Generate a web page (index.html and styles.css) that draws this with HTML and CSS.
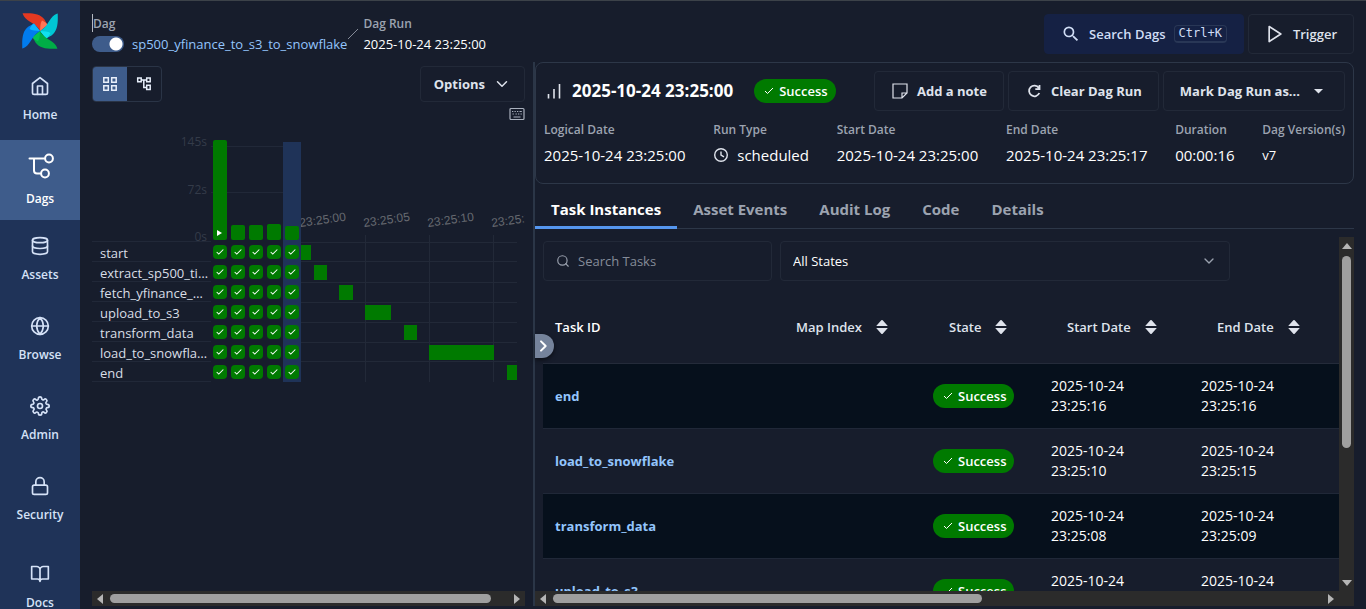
FILE: index.html
```html
<!DOCTYPE html>
<html lang="en">
<head>
<meta charset="utf-8">
<title>sp500_yfinance_to_s3_to_snowflake - Airflow</title>
<link rel="stylesheet" href="styles.css">
</head>
<body>
<svg class="defs" width="0" height="0" aria-hidden="true">
  <symbol id="check" viewBox="0 0 24 24"><path d="M20 6L9 17l-5-5"/></symbol>
  <symbol id="sort" viewBox="0 0 16 18"><path d="M7.300 2.300L2.200 8h11.600L8.700 2.300Q8 1.600 7.300 2.300zM7.300 15.700L2.200 10h11.600L8.700 15.700Q8 16.400 7.300 15.700z"/></symbol>
</svg>

<nav class="sidebar">
  <a class="logo" href="#" aria-label="Airflow">
    <svg viewBox="0 0 36 36" width="36" height="36">
      <path fill="#e43921" d="M.6.3C11-.1 18 .5 22.500 6.500L25.500 12 18 18C14.500 11.500 9 10 5.500 7 2.500 5 1 2 .6.300z"/>
      <path fill="#ff7557" d="M18 18C18.500 14 18 10 20 7.500 22.500 8.500 25 10.500 25.500 12z"/>
      <g transform="rotate(90 18 18)"><path fill="#00c7d4" d="M.6.3C11-.1 18 .5 22.500 6.500L25.500 12 18 18C14.500 11.500 9 10 5.500 7 2.500 5 1 2 .6.300z"/><path fill="#11e1ee" d="M18 18C18.500 14 18 10 20 7.500 22.500 8.500 25 10.500 25.500 12z"/></g>
      <g transform="rotate(180 18 18)"><path fill="#00ad46" d="M.6.3C11-.1 18 .5 22.500 6.500L25.500 12 18 18C14.500 11.500 9 10 5.500 7 2.500 5 1 2 .6.300z"/><path fill="#04c252" d="M18 18C18.500 14 18 10 20 7.500 22.500 8.500 25 10.500 25.500 12z"/></g>
      <g transform="rotate(270 18 18)"><path fill="#017cee" d="M.6.3C11-.1 18 .5 22.500 6.500L25.500 12 18 18C14.500 11.500 9 10 5.500 7 2.500 5 1 2 .6.300z"/><path fill="#0cb6ff" d="M18 18C18.500 14 18 10 20 7.500 22.500 8.500 25 10.500 25.500 12z"/></g>
    </svg>
  </a>
  <a class="nav" href="#"><svg class="line" viewBox="0 0 24 24"><path d="M3 9l9-7 9 7v11a2 2 0 0 1-2 2H5a2 2 0 0 1-2-2z"/><path d="M9 22V12h6v10"/></svg>Home</a>
  <a class="nav active" href="#"><svg class="line big" viewBox="0 0 28 28"><path d="M3.500 6.500h15M8 6.500V18.500a3 3 0 0 0 3 3h3.500"/><circle cx="23" cy="6.500" r="3.900"/><circle cx="19" cy="21.500" r="3.900"/></svg>Dags</a>
  <a class="nav" href="#"><svg class="line" viewBox="0 0 24 24"><ellipse cx="12" cy="5" rx="9" ry="3"/><path d="M21 12c0 1.660-4 3-9 3s-9-1.340-9-3"/><path d="M3 5v14c0 1.660 4 3 9 3s9-1.340 9-3V5"/></svg>Assets</a>
  <a class="nav" href="#"><svg class="line" viewBox="0 0 24 24"><circle cx="12" cy="12" r="10"/><path d="M2 12h20M12 2a15.300 15.300 0 0 1 4 10 15.300 15.300 0 0 1-4 10 15.300 15.300 0 0 1-4-10 15.300 15.300 0 0 1 4-10z"/></svg>Browse</a>
  <a class="nav" href="#"><svg class="line" viewBox="0 0 24 24"><circle cx="12" cy="12" r="3"/><path d="M19.400 15a1.650 1.650 0 0 0 .33 1.820l.06.06a2 2 0 0 1-2.830 2.830l-.06-.06a1.650 1.650 0 0 0-2.800 1.170V21a2 2 0 0 1-4 0v-.09A1.650 1.650 0 0 0 9 19.400a1.650 1.650 0 0 0-1.820.33l-.06.06a2 2 0 0 1-2.830-2.830l.06-.06A1.650 1.650 0 0 0 3.180 14H3a2 2 0 0 1 0-4h.09A1.650 1.650 0 0 0 4.600 9a1.650 1.650 0 0 0-.33-1.820l-.06-.06a2 2 0 0 1 2.830-2.830l.06.06A1.650 1.650 0 0 0 10 3.180V3a2 2 0 0 1 4 0v.09a1.650 1.650 0 0 0 2.800 1.170l.06-.06a2 2 0 0 1 2.830 2.830l-.06.06A1.650 1.650 0 0 0 20.820 10H21a2 2 0 0 1 0 4h-.09a1.650 1.650 0 0 0-1.510 1z"/></svg>Admin</a>
  <a class="nav" href="#"><svg class="line" viewBox="0 0 24 24"><rect x="3" y="11" width="18" height="11" rx="2"/><path d="M7 11V7a5 5 0 0 1 10 0v4"/></svg>Security</a>
  <a class="nav docs" href="#"><svg class="line" viewBox="0 0 24 24"><path d="M2 3h6a4 4 0 0 1 4 4v14a3 3 0 0 0-3-3H2zM22 3h-6a4 4 0 0 0-4 4v14a3 3 0 0 1 3-3h7z"/></svg>Docs</a>
</nav>

<main class="page">
  <header class="topbar">
    <div class="crumb">
      <span class="crumb-label caret">Dag</span>
      <span class="crumb-value"><input class="switch" type="checkbox" role="switch" checked aria-label="Dag active"><a href="#">sp500_yfinance_to_s3_to_snowflake</a></span>
    </div>
    <svg class="slash" viewBox="0 0 12 14" width="12" height="14"><path d="M1 12L11 2"/></svg>
    <div class="crumb">
      <span class="crumb-label">Dag Run</span>
      <span class="crumb-value">2025-10-24 23:25:00</span>
    </div>
    <div class="actions">
      <button class="btn search"><svg width="20" height="20" viewBox="0 0 24 24" fill="currentColor"><path d="M15.500 14h-.79l-.28-.27A6.470 6.470 0 0 0 16 9.500 6.500 6.500 0 1 0 9.500 16c1.610 0 3.090-.59 4.230-1.570l.27.28v.79l5 4.990L20.490 19l-4.990-5zm-6 0C7.010 14 5 11.990 5 9.500S7.010 5 9.500 5 14 7.010 14 9.500 11.990 14 9.500 14z"/></svg>Search Dags<kbd>Ctrl+K</kbd></button>
      <button class="btn trigger"><svg class="line" viewBox="0 0 24 24"><path d="M5 3l14 9-14 9z"/></svg>Trigger</button>
    </div>
  </header>

  <div class="panels">
    <section class="left">
      <div class="toolbar">
        <div class="toggle">
          <button class="on" aria-label="Grid view"><svg width="18" height="18" viewBox="0 0 18 18"><path d="M2.800 2.800h4.500v4.500H2.800zM10.700 2.800h4.500v4.500h-4.500zM2.800 10.700h4.500v4.500H2.800zM10.700 10.700h4.500v4.500h-4.500z"/></svg></button>
          <button aria-label="Graph view"><svg width="18" height="18" viewBox="0 0 18 18"><path d="M2.700 3h3.500v3.800H2.700zM11.700 3h3.500v3.800h-3.500zM11.700 10.300h3.500v4.200h-3.500zM6.200 5h5.500M8.800 5v7.400h2.900"/></svg></button>
        </div>
        <button class="btn options">Options<svg class="line" viewBox="0 0 24 24"><path d="M6 9l6 6 6-6"/></svg></button>
      </div>
      <div class="keys"><svg width="16" height="14" viewBox="0 0 16 14"><rect x="1" y="1.500" width="14" height="11" rx="1"/><path d="M3 4.500h1.300M5.500 4.500h1.300M8 4.500h1.300M10.500 4.500h2.300M3.500 7h1.300M6.500 7h1.300M9 7h1.300M11.500 7h1.300M4.500 10h7"/></svg></div>

      <div class="chart">
        <div class="names">
          <div class="axis"><span>145s</span><span>72s</span><span>0s</span></div>
          <div class="name">start</div><div class="name">extract_sp500_tickers</div><div class="name">fetch_yfinance_data</div><div class="name">upload_to_s3</div><div class="name">transform_data</div><div class="name">load_to_snowflake</div><div class="name">end</div>
        </div>
        <div class="runs" id="runs"></div>
        <svg class="gantt" viewBox="0 0 224 242" width="224" height="242">
          <g class="ticks"><path d="M0 102.500H216M0 121.500H216M0 142.500H216M0 162.500H216M0 182.500H216M0 202.500H216M0 221.500H216M64.500 95V242M128.500 95V242M192.500 95V242"/></g>
          <g class="times"><text transform="translate(-1 87) rotate(-8)">23:25:00</text><text transform="translate(63 87) rotate(-8)">23:25:05</text><text transform="translate(127 87) rotate(-8)">23:25:10</text><text transform="translate(191 87) rotate(-8)">23:25:15</text></g>
          <g class="bars"><rect x="0" y="105" width="10" height="15"/><rect x="13" y="125" width="13" height="15"/><rect x="38" y="145" width="14" height="15"/><rect x="64" y="165" width="26" height="15"/><rect x="103" y="185" width="13" height="15"/><rect x="128" y="205" width="65" height="15"/><rect x="206" y="225" width="10" height="15"/></g>
        </svg>
      </div>
      <div class="hscroll left-scroll"><i class="arr l"></i><b></b><i class="arr r"></i></div>
    </section>

    <section class="right">
      <button class="collapse" aria-label="Expand panel"><svg class="line" viewBox="0 0 24 24"><path d="M9 5l7 7-7 7"/></svg></button>
      <div class="card">
        <div class="card-head">
          <svg width="18" height="18" viewBox="0 0 18 18" class="bars-icon"><path d="M4.500 12v4.500M10 7v9.500M15.500 2v14.500"/></svg>
          <h1>2025-10-24 23:25:00</h1>
          <span class="badge"><svg><use href="#check"/></svg>Success</span>
          <div class="card-actions">
            <button class="btn"><svg width="18" height="18" viewBox="0 0 18 18" class="thin"><path d="M2 2h14v9l-5 5H2zM16 11h-5v5"/></svg>Add a note</button>
            <button class="btn"><svg width="18" height="18" viewBox="0 0 18 18" class="redo"><path d="M13.800 6A5.300 5.300 0 1 0 14.300 11M14.500 3v4.200H10.300"/></svg>Clear Dag Run</button>
            <button class="btn">Mark Dag Run as...<svg width="20" height="20" viewBox="0 0 20 20"><path fill="currentColor" d="M6 8h9l-4.500 4.500z"/></svg></button>
          </div>
        </div>
        <dl class="stats">
          <div><dt>Logical Date</dt><dd>2025-10-24 23:25:00</dd></div>
          <div><dt>Run Type</dt><dd><svg class="clock" width="16" height="16" viewBox="0 0 16 16"><circle cx="8" cy="8" r="6.300"/><path d="M8 4.500V8l3 1.800"/></svg>scheduled</dd></div>
          <div><dt>Start Date</dt><dd>2025-10-24 23:25:00</dd></div>
          <div><dt>End Date</dt><dd>2025-10-24 23:25:17</dd></div>
          <div><dt>Duration</dt><dd>00:00:16</dd></div>
          <div><dt>Dag Version(s)</dt><dd class="small">v7</dd></div>
        </dl>
      </div>
      <nav class="tabs"><a class="active" href="#">Task Instances</a><a href="#">Asset Events</a><a href="#">Audit Log</a><a href="#">Code</a><a href="#">Details</a></nav>
      <div class="viewport">
        <div class="content">
          <div class="filters">
            <label class="field"><svg class="line" viewBox="0 0 24 24"><circle cx="11" cy="11" r="8"/><path d="M21 21l-4.350-4.350"/></svg><input type="text" placeholder="Search Tasks" aria-label="Search Tasks"></label>
            <div class="field states"><select aria-label="State"><option>All States</option></select><svg class="line" viewBox="0 0 24 24"><path d="M6 9l6 6 6-6"/></svg></div>
          </div>
          <table>
            <colgroup><col><col class="c-map"><col class="c-state"><col class="c-date"><col class="c-date"></colgroup>
            <thead><tr><th>Task ID</th><th><button>Map Index<svg><use href="#sort"/></svg></button></th><th><button>State<svg><use href="#sort"/></svg></button></th><th><button>Start Date<svg><use href="#sort"/></svg></button></th><th><button>End Date<svg><use href="#sort"/></svg></button></th></tr></thead>
            <tbody>
              <tr><td><a href="#">end</a></td><td></td><td><span class="badge"><svg><use href="#check"/></svg>Success</span></td><td>2025-10-24 23:25:16</td><td>2025-10-24 23:25:16</td></tr>
              <tr><td><a href="#">load_to_snowflake</a></td><td></td><td><span class="badge"><svg><use href="#check"/></svg>Success</span></td><td>2025-10-24 23:25:10</td><td>2025-10-24 23:25:15</td></tr>
              <tr><td><a href="#">transform_data</a></td><td></td><td><span class="badge"><svg><use href="#check"/></svg>Success</span></td><td>2025-10-24 23:25:08</td><td>2025-10-24 23:25:09</td></tr>
              <tr><td><a href="#">upload_to_s3</a></td><td></td><td><span class="badge"><svg><use href="#check"/></svg>Success</span></td><td>2025-10-24 23:25:05</td><td>2025-10-24 23:25:07</td></tr>
            </tbody>
          </table>
        </div>
        <div class="vscroll"><i class="arr u"></i><b></b><i class="arr d"></i></div>
      </div>
      <div class="hscroll right-scroll"><i class="arr l"></i><b></b><i class="arr r"></i></div>
    </section>
  </div>
</main>
<script src="runs.js"></script>
</body>
</html>
```

FILE: runs.js
```
const heights = [100, 15, 15, 16, 14];
const taskCount = 7;
document.getElementById("runs").innerHTML = heights.map((h, i) => {
  const play = i === 0 ? '<svg width="6" height="8" viewBox="0 0 6 8"><path fill="#fff" d="M0 1l5 3-5 3z"/></svg>' : "";
  const cell = '<span class="cell"><i><svg><use href="#check"/></svg></i></span>';
  const on = i === heights.length - 1 ? " selected" : "";
  return `<div class="run${on}"><div class="duration"><div style="height:${h}px">${play}</div></div>${cell.repeat(taskCount)}</div>`;
}).join("");
```

FILE: styles.css
```css
* { box-sizing: border-box; }
body {
  margin: 0; height: 100vh; display: flex; overflow: hidden;
  background: #171d2c; color: #fff; border-top: 1px solid #3c4249;
  font: 14px/20px "Open Sans", "Noto Sans", sans-serif;
}
a { color: #93c5fd; text-decoration: none; }
button, input, select { font: inherit; color: inherit; }
.defs { position: absolute; }
.line { width: 20px; height: 20px; fill: none; stroke: currentColor; stroke-width: 2; stroke-linecap: round; stroke-linejoin: round; }

.sidebar { flex: none; width: 80px; display: flex; flex-direction: column; background: #1f3358; }
.logo { flex: none; height: 59px; padding: 12px 0 0 22px; }
.nav {
  flex: none; height: 80px; display: flex; flex-direction: column; align-items: center; justify-content: center; gap: 9px; padding-top: 1px;
  color: #d5e2f7; font-size: 12px; font-weight: 600;
}
.nav.active { background: #3e5c8b; color: #fff; }
.nav .big { width: 28px; height: 28px; }
.docs { margin-top: 8px; }

.page { flex: 1; min-width: 0; display: flex; flex-direction: column; padding: 13px 12px 3px; }
.topbar { display: flex; height: 40px; margin-bottom: 8px; }
.crumb { display: flex; flex-direction: column; font-size: 13px; }
.crumb-label { color: #9ca3b0; font-size: 12px; font-weight: 600; align-self: flex-start; height: 18px; margin-bottom: 2px; line-height: 20px; }
.caret { border-left: 1px solid #b4b8c0; }
.crumb-value { display: flex; align-items: center; gap: 8px; height: 20px; }
.switch { appearance: none; width: 32px; height: 16px; margin: 0; border-radius: 8px; background: radial-gradient(circle at 24px 8px, #fff 6px, #3e5c8b 7px); }
.slash { margin: 13px 4px 0 0; fill: none; stroke: #858b98; }
.actions { margin-left: auto; display: flex; gap: 4px; }
.btn {
  display: flex; align-items: center; gap: 8px; height: 40px; padding: 0 16px;
  background: none; border: 1px solid #222938; border-radius: 4px; color: #dfe3ec; font-size: 13px; font-weight: 700; white-space: nowrap;
}
.actions .btn { font-weight: 600; }
.search { background: #152144; border-color: #152144; color: #d0ddf5; }
kbd { height: 18px; padding: 0 4px; border: 1px solid #293756; border-bottom-width: 2px; border-radius: 4px; font: 12px/15px "DejaVu Sans Mono", monospace; }

.panels { flex: 1; min-height: 0; display: flex; }
.left { flex: none; width: 441px; padding: 4px 8px 0 0; display: flex; flex-direction: column; }
.toolbar { display: flex; justify-content: space-between; }
.toggle { display: flex; height: 36px; border: 1px solid #2a3446; border-radius: 4px; overflow: hidden; }
.toggle button { width: 34px; padding: 0; border: 0; background: none; display: flex; align-items: center; justify-content: center; }
.toggle .on { background: #3e5c8b; }
.toggle path { fill: none; stroke: #e8effb; stroke-width: 1.5; }
.options { height: 36px; padding: 0 13px; }
.options .line { width: 18px; height: 18px; }
.keys { display: flex; justify-content: flex-end; height: 14px; margin: 5px 0 11px; }
.keys svg { fill: none; stroke: #a9b0bd; stroke-width: 1.2; }

.chart { flex: 1; min-height: 0; display: flex; align-items: flex-start; overflow: hidden; padding-top: 8px; }
.names { flex: none; width: 119px; color: #d9dde6; font-size: 13px; }
.axis { height: 102px; display: flex; flex-direction: column; justify-content: space-between; align-items: flex-end; padding: 0 4px 2px 0; color: #343b49; font-size: 12px; line-height: 4px; border-bottom: 1px solid #212838; }
.name { height: 20px; line-height: 22px; padding: 0 2px 0 8px; border-bottom: 1px solid #212838; overflow: hidden; text-overflow: ellipsis; white-space: nowrap; }
.runs { flex: none; display: flex; background: linear-gradient(#212838, #212838) 0 6px / 100% 1px no-repeat, linear-gradient(#212838, #212838) 0 52px / 100% 1px no-repeat; }
.run { width: 18px; }
.selected { background: linear-gradient(#1f3358, #1f3358) 0 2px no-repeat; }
.duration { height: 102px; padding: 0 2px 2px; display: flex; align-items: flex-end; }
.duration div { width: 14px; background: #007a00; border-radius: 2px; display: flex; align-items: flex-end; justify-content: center; padding-bottom: 3px; }
.cell { display: flex; justify-content: center; height: 20px; padding-top: 3px; }
.cell i { width: 14px; height: 14px; border-radius: 4px; background: #007a00; display: flex; align-items: center; justify-content: center; }
.cell svg { width: 10px; height: 10px; fill: none; stroke: #fff; stroke-width: 2.5; }
.gantt { flex: none; }
.ticks { fill: none; stroke: #222938; }
.bars { fill: #007a00; }
.times { fill: #666970; font: 12px "Liberation Sans", sans-serif; }

.hscroll, .vscroll { flex: none; display: flex; align-items: center; background: #2b2b2b; }
.hscroll { height: 15px; padding: 0 5px; }
.hscroll b { height: 9px; border-radius: 5px; background: #9f9f9f; margin-left: 7px; }
.hscroll .r { margin-left: auto; }
.vscroll { width: 15px; flex-direction: column; padding: 6px 0 5px; }
.vscroll b { width: 9px; height: 56%; border-radius: 5px; background: #9f9f9f; margin-top: 7px; }
.vscroll .d { margin-top: auto; }
.left-scroll b { width: 90%; }
.right-scroll { padding-right: 20px; }
.right-scroll b { width: 54%; }
.arr { width: 0; height: 0; border: 0 solid transparent; }
.l { border-width: 5px 6px 5px 0; border-right-color: #b5b5b5; }
.r { border-width: 5px 0 5px 6px; border-left-color: #b5b5b5; }
.u { border-width: 0 5px 6px; border-bottom-color: #b5b5b5; }
.d { border-width: 6px 5px 0; border-top-color: #b5b5b5; }

.right { flex: 1; min-width: 0; display: flex; flex-direction: column; border-left: 2px solid #2b3647; position: relative; }
.collapse { position: absolute; left: 0; top: 272px; width: 19px; height: 24px; padding: 0; border: 0; border-radius: 0 12px 12px 0; background: #75839b; display: flex; align-items: center; box-shadow: 0 2px 4px #0008; }
.collapse .line { width: 16px; height: 16px; stroke-width: 3; }
.card { border: 1px solid #2d3748; border-radius: 8px; padding: 8px; }
.card-head { display: flex; align-items: center; height: 40px; }
.bars-icon { fill: none; stroke: #dfe3ec; stroke-width: 1.6; }
h1 { margin: 0 21px 0 10px; font-size: 17px; font-weight: 700; white-space: nowrap; }
.badge { display: inline-flex; align-items: center; gap: 4px; height: 24px; padding: 0 8px 0 9px; border-radius: 12px; background: #007a00; color: #fff; font-size: 13px; font-weight: 600; }
.badge svg { width: 12px; height: 12px; fill: none; stroke: #fff; stroke-width: 2; }
.card-actions { margin-left: auto; display: flex; gap: 4px; }
.thin { fill: none; stroke: currentColor; stroke-width: 1.2; }
.redo { fill: none; stroke: currentColor; stroke-width: 1.8; }
.stats { display: flex; justify-content: space-between; margin: 9px 0 8px; }
dt { color: #9ca3b0; font-size: 12px; font-weight: 600; line-height: 20px; }
dd { margin: 3px 0 0; display: flex; align-items: center; gap: 8px; font-size: 15px; line-height: 24px; white-space: nowrap; }
dd.small { font-size: 13px; }
.clock { fill: none; stroke: #dfe3ec; stroke-width: 1.4; }

.tabs { display: flex; margin-top: 5px; border-bottom: 1px solid #2d3748; }
.tabs a { height: 39px; padding: 0 16px; line-height: 40px; color: #9ca3b0; font-size: 15px; font-weight: 700; }
.tabs .active { color: #fff; border-bottom: 3px solid #5596ee; margin-bottom: -1px; height: 40px; }
.viewport { flex: 1; min-height: 0; display: flex; margin-top: 8px; }
.content { flex: 1; min-width: 0; overflow: hidden; padding: 4px 0 0 8px; }
.filters { display: flex; gap: 8px; margin-bottom: 10px; padding-right: 109px; }
.field { flex: 203 1 0; min-width: 0; height: 40px; display: flex; align-items: center; gap: 8px; padding: 0 12px; border: 1px solid #222938; border-radius: 4px; color: #9aa1ae; }
.field .line { flex: none; width: 14px; height: 14px; }
.field input { width: 100%; min-width: 0; padding: 0; border: 0; background: none; outline: 0; font-size: 13px; }
.field input::placeholder { color: #858c99; opacity: 1; }
.field.states { flex-grow: 424; }
.states select { flex: 1; appearance: none; border: 0; padding: 0; background: none; color: #fff; font-size: 13px; }
.field.states .line { width: 16px; height: 16px; }

table { width: 100%; table-layout: fixed; border-collapse: separate; border-spacing: 0; }
.c-map { width: 153px; }
.c-state { width: 118px; }
.c-date { width: 150px; }
th { height: 73px; padding: 0 12px; text-align: left; font-size: 13px; font-weight: 600; border-bottom: 1px solid #242b3a; white-space: nowrap; }
th button { display: flex; align-items: center; gap: 12px; padding: 0 0 0 16px; border: 0; background: none; color: #dfe3ec; }
th svg { width: 16px; height: 18px; fill: #dfe3ec; }
td { height: 65px; padding: 0 12px; border-bottom: 1px solid #202838; font-size: 14px; }
td .badge { vertical-align: middle; }
tbody tr:nth-child(odd) { background: #06101c; }
td a { font-size: 13px; font-weight: 700; }
```
